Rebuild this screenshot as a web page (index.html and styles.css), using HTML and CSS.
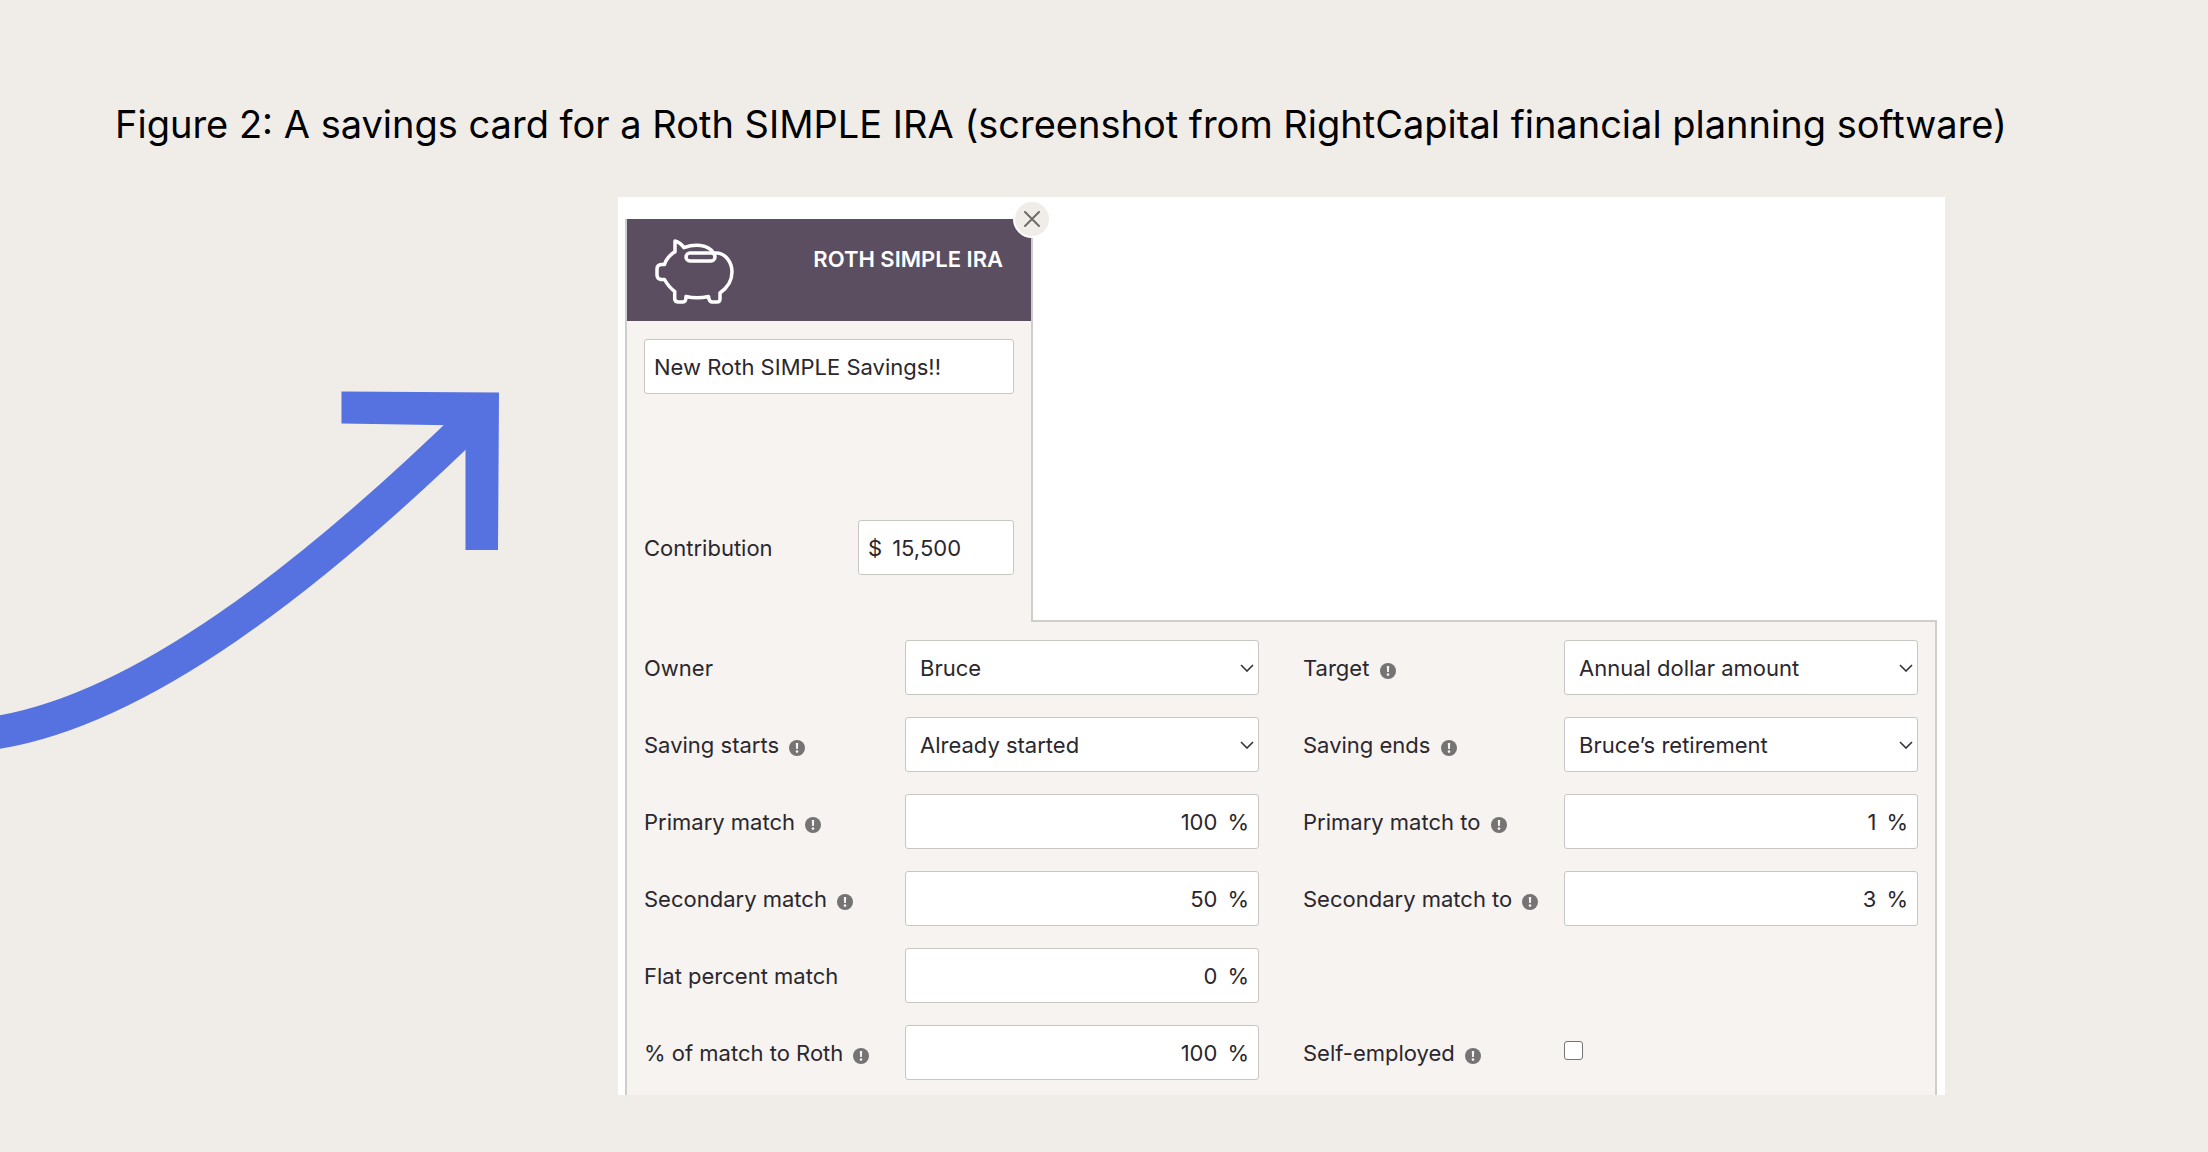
FILE: index.html
```
<!DOCTYPE html>
<html lang="en">
<head>
  <title>Savings card</title>
  <meta charset="UTF-8">
  <link rel="stylesheet" href="styles.css">
</head>
<body>
  <svg class="sprite" aria-hidden="true">
    <symbol id="info" viewBox="0 0 16 16">
      <circle cx="8" cy="8" r="8" fill="#757373"/>
      <path d="M6.8 3h2.4l-.3 6H7.1z" fill="#f6f4f1"/>
      <circle cx="8" cy="11.6" r="1.3" fill="#f6f4f1"/>
    </symbol>
  </svg>

  <h1 class="figure-title">Figure 2: A savings card for a Roth SIMPLE IRA (screenshot from RightCapital financial planning software)</h1>

  <main class="figure">
    <svg class="arrow" viewBox="0 0 540 410" aria-hidden="true">
      <path class="arrow-curve" d="M-20 376L0 372C140 348 305 224 480 53"/>
      <path class="arrow-head" d="M341.5 31.5L499 32.5L498 190H465.5V65.5L341.5 63.5z"/>
    </svg>

    <form class="frame">
      <section class="tab">
        <header class="tab-header">
          <svg class="piggy" viewBox="0 0 90 80" aria-hidden="true">
            <path d="M25 20V9Q30 10 34 15.7C44 12 58 12 63.5 21H66C76 21 82 31 82 40C82 49 77 56 70 61V67Q70 70 67 70H62.5Q59 70 58.5 64.5Q47 67 36 64.5Q36 70 33 70H28.5Q25 70 24.7 67V59.5C20 56 17 52 14.5 47.5H11Q7 47 7 43V37Q7 33 11 32.5H14.5C16 27 20 23 25 19.5z"/>
            <rect x="36" y="21" width="29" height="8" rx="4"/>
          </svg>
          <h2 class="tab-title">ROTH SIMPLE IRA</h2>
          <button type="button" class="close" aria-label="Close">
            <svg viewBox="0 0 16 16"><path d="M1 1l14 14M15 1L1 15"/></svg>
          </button>
        </header>
        <div class="tab-body">
          <input type="text" class="box name" aria-label="Savings name" value="New Roth SIMPLE Savings!!">
          <div class="contribution">
            <label for="contribution">Contribution</label>
            <div class="box money"><span>$</span><input type="text" id="contribution" value="15,500"></div>
          </div>
        </div>
      </section>

      <section class="details">
        <div class="field">
          <label for="owner">Owner</label>
          <select class="box" id="owner"><option>Bruce</option></select>
        </div>
        <div class="field">
          <label for="target">Target <svg class="info"><use href="#info"/></svg></label>
          <select class="box" id="target"><option>Annual dollar amount</option></select>
        </div>
        <div class="field">
          <label for="starts">Saving starts <svg class="info"><use href="#info"/></svg></label>
          <select class="box" id="starts"><option>Already started</option></select>
        </div>
        <div class="field">
          <label for="ends">Saving ends <svg class="info"><use href="#info"/></svg></label>
          <select class="box" id="ends"><option>Bruce’s retirement</option></select>
        </div>
        <div class="field">
          <label for="primary">Primary match <svg class="info"><use href="#info"/></svg></label>
          <div class="box percent"><input type="text" id="primary" value="100"><span>%</span></div>
        </div>
        <div class="field">
          <label for="primary-to">Primary match to <svg class="info"><use href="#info"/></svg></label>
          <div class="box percent"><input type="text" id="primary-to" value="1"><span>%</span></div>
        </div>
        <div class="field">
          <label for="secondary">Secondary match <svg class="info"><use href="#info"/></svg></label>
          <div class="box percent"><input type="text" id="secondary" value="50"><span>%</span></div>
        </div>
        <div class="field">
          <label for="secondary-to">Secondary match to <svg class="info"><use href="#info"/></svg></label>
          <div class="box percent"><input type="text" id="secondary-to" value="3"><span>%</span></div>
        </div>
        <div class="field first-column">
          <label for="flat">Flat percent match</label>
          <div class="box percent"><input type="text" id="flat" value="0"><span>%</span></div>
        </div>
        <div class="field first-column">
          <label for="roth">% of match to Roth <svg class="info"><use href="#info"/></svg></label>
          <div class="box percent"><input type="text" id="roth" value="100"><span>%</span></div>
        </div>
        <div class="field">
          <label for="self-employed">Self-employed <svg class="info"><use href="#info"/></svg></label>
          <input type="checkbox" class="check" id="self-employed">
        </div>
      </section>
    </form>
  </main>
</body>
</html>
```

FILE: styles.css
```
* {
  box-sizing: border-box;
}
body {
  margin: 0;
  padding: 100px 0 56px;
  background-color: #f0ede8;
  color: #2b272d;
  font-family: Inter, "Liberation Sans", sans-serif;
  font-size: 22px;
  line-height: 28px;
}
.sprite {
  display: none;
}
.figure-title {
  margin: 0 0 49px;
  padding-left: 115px;
  color: #000;
  font-size: 38px;
  font-weight: 400;
  line-height: 48px;
}
.figure {
  display: grid;
  grid-template-columns: 618px minmax(0, 1fr) 263px;
}
/* Arrow pointing at the card */
.arrow {
  width: 540px;
  height: 410px;
  margin-top: 163px;
}
.arrow-curve {
  fill: none;
  stroke: #5671e0;
  stroke-width: 33;
}
.arrow-head {
  fill: #5671e0;
}
/* Card */
.frame {
  padding: 22px 8px 0 7px;
  background-color: #fff;
}
.tab {
  position: relative;
  z-index: 1;
  width: 408px;
  margin-bottom: -2px;
  border: solid #d0cecb;
  border-width: 0 2px;
  background-color: #f6f3f0;
}
.tab-header {
  position: relative;
  display: flex;
  justify-content: space-between;
  height: 102px;
  padding: 13px 28px 0 23px;
  background-color: #5c4e61;
}
.piggy {
  width: 90px;
  height: 80px;
  fill: none;
  stroke: #fff;
  stroke-width: 3.5;
  stroke-linejoin: round;
}
.tab-title {
  margin: 13px 0 0;
  color: #fff;
  font-size: 22px;
  font-weight: 600;
  line-height: 28px;
}
.close {
  position: absolute;
  top: -19px;
  right: -20px;
  display: flex;
  align-items: center;
  justify-content: center;
  width: 38px;
  height: 38px;
  padding: 0;
  border: 2px solid #fff;
  border-radius: 50%;
  background-color: #f0ede8;
}
.close svg {
  width: 16px;
  height: 16px;
  fill: none;
  stroke: #6f6c6c;
  stroke-width: 2;
  stroke-linecap: round;
}
.tab-body {
  padding: 18px 17px 47px;
}
.box {
  width: 100%;
  height: 55px;
  border: 1px solid #c9c7c4;
  border-radius: 3px;
  background-color: #fff;
  color: inherit;
  font: inherit;
}
.name {
  display: block;
  padding: 0 9px;
}
.contribution {
  display: flex;
  align-items: center;
  justify-content: space-between;
  margin-top: 126px;
}
.money,
.percent {
  display: flex;
  align-items: center;
  gap: 10px;
  padding: 0 9px;
}
.money {
  width: 156px;
}
.money input,
.percent input {
  flex: 1;
  min-width: 0;
  padding: 0;
  border: none;
  background: none;
  color: inherit;
  font: inherit;
}
.percent input {
  text-align: right;
}
.details {
  display: grid;
  grid-template-columns: 1fr 1fr;
  gap: 22px 44px;
  padding: 18px 17px 15px;
  border: solid #d0cecb;
  border-width: 2px 2px 0;
  background-color: #f6f3f0;
}
.field {
  display: grid;
  grid-template-columns: 261px minmax(0, 1fr);
  align-items: center;
}
.first-column {
  grid-column: 1;
}
.info {
  width: 16px;
  height: 16px;
  margin-left: 4px;
  vertical-align: -3px;
}
select.box {
  padding: 0 14px;
  appearance: none;
  background: #fff url("data:image/svg+xml,%3Csvg xmlns='http://www.w3.org/2000/svg' width='14' height='8' fill='none' stroke='%23333' stroke-width='1.6'%3E%3Cpath d='M1 1l6 6 6-6'/%3E%3C/svg%3E") no-repeat right 4px center;
}
.check {
  width: 19px;
  height: 19px;
  margin: 0 0 4px;
  appearance: none;
  border: 1px solid #767478;
  border-radius: 3px;
  background-color: #fff;
}
```
